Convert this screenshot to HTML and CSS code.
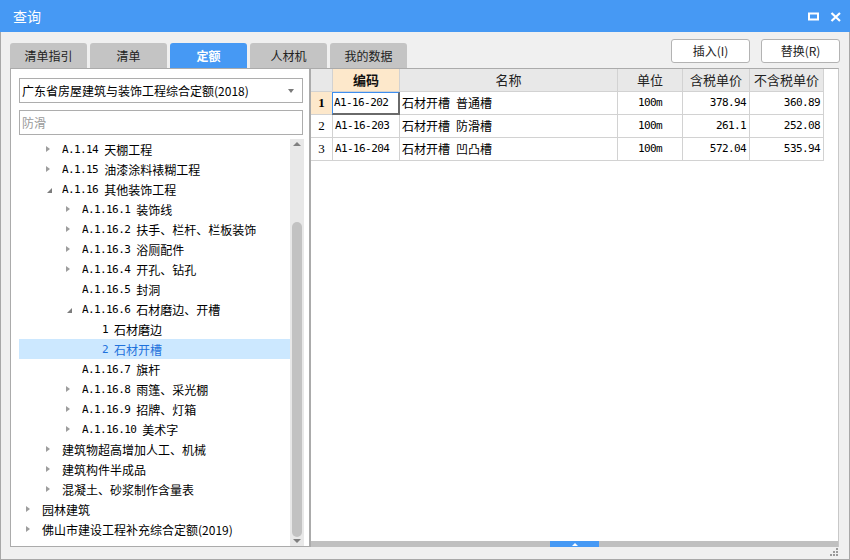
FILE: index.html
```html
<!DOCTYPE html>
<html lang="zh-CN">
<head>
<meta charset="utf-8">
<title>查询</title>
<link rel="stylesheet" href="styles.css">
</head>
<body>
<div class="window">
  <div class="titlebar">
    <span class="title">查询</span>
    <div class="ctrls">
      <svg class="ico" width="12" height="10" viewBox="0 0 12 10"><rect x="1" y="1.5" width="9" height="6" fill="none" stroke="#fff" stroke-width="2"/></svg>
      <svg class="ico" width="12" height="10" viewBox="0 0 12 10"><path d="M1.5 1 L10 9 M10 1 L1.5 9" stroke="#fff" stroke-width="2.2"/></svg>
    </div>
  </div>
  <div class="content">
    <div class="toprow">
      <div class="tabs">
        <div class="tab">清单指引</div>
        <div class="tab">清单</div>
        <div class="tab active">定额</div>
        <div class="tab">人材机</div>
        <div class="tab">我的数据</div>
      </div>
      <div class="buttons">
        <div class="btn">插入(I)</div>
        <div class="btn">替换(R)</div>
      </div>
    </div>
    <div class="panes">
      <div class="left">
        <div class="combo"><span>广东省房屋建筑与装饰工程综合定额(2018)</span><span class="caret"></span></div>
        <div class="search">防滑</div>
        <div class="treewrap">
          <div class="tree">
            <div class="row l2"><i class="ar"></i><span class="m">A.1.14 </span>天棚工程</div>
            <div class="row l2"><i class="ar"></i><span class="m">A.1.15 </span>油漆涂料裱糊工程</div>
            <div class="row l2"><i class="ar open"></i><span class="m">A.1.16 </span>其他装饰工程</div>
            <div class="row l3"><i class="ar"></i><span class="m">A.1.16.1 </span>装饰线</div>
            <div class="row l3"><i class="ar"></i><span class="m">A.1.16.2 </span>扶手、栏杆、栏板装饰</div>
            <div class="row l3"><i class="ar"></i><span class="m">A.1.16.3 </span>浴厕配件</div>
            <div class="row l3"><i class="ar"></i><span class="m">A.1.16.4 </span>开孔、钻孔</div>
            <div class="row l3"><i class="ar none"></i><span class="m">A.1.16.5 </span>封洞</div>
            <div class="row l3"><i class="ar open"></i><span class="m">A.1.16.6 </span>石材磨边、开槽</div>
            <div class="row l4"><i class="ar none"></i><span class="m">1 </span>石材磨边</div>
            <div class="row l4 sel"><i class="ar none"></i><span class="m">2 </span>石材开槽</div>
            <div class="row l3"><i class="ar none"></i><span class="m">A.1.16.7 </span>旗杆</div>
            <div class="row l3"><i class="ar"></i><span class="m">A.1.16.8 </span>雨篷、采光棚</div>
            <div class="row l3"><i class="ar"></i><span class="m">A.1.16.9 </span>招牌、灯箱</div>
            <div class="row l3"><i class="ar"></i><span class="m">A.1.16.10 </span>美术字</div>
            <div class="row l2"><i class="ar"></i>建筑物超高增加人工、机械</div>
            <div class="row l2"><i class="ar"></i>建筑构件半成品</div>
            <div class="row l2"><i class="ar"></i>混凝土、砂浆制作含量表</div>
            <div class="row l1"><i class="ar"></i>园林建筑</div>
            <div class="row l1"><i class="ar"></i>佛山市建设工程补充综合定额(2019)</div>
          </div>
          <div class="vscroll">
            <i class="sa up"></i>
            <div class="thumbarea"><div class="thumb"></div></div>
            <i class="sa down"></i>
          </div>
        </div>
      </div>
      <div class="right">
        <div class="grid">
          <div class="h rn"></div>
          <div class="h code">编码</div>
          <div class="h">名称</div>
          <div class="h">单位</div>
          <div class="h">含税单价</div>
          <div class="h">不含税单价</div>

          <div class="c rn cur">1</div>
          <div class="c m focus">A1-16-202</div>
          <div class="c name">石材开槽&ensp;普通槽</div>
          <div class="c m ctr">100m</div>
          <div class="c m num">378.94</div>
          <div class="c m num">360.89</div>

          <div class="c rn">2</div>
          <div class="c m">A1-16-203</div>
          <div class="c name">石材开槽&ensp;防滑槽</div>
          <div class="c m ctr">100m</div>
          <div class="c m num">261.1</div>
          <div class="c m num">252.08</div>

          <div class="c rn">3</div>
          <div class="c m">A1-16-204</div>
          <div class="c name">石材开槽&ensp;凹凸槽</div>
          <div class="c m ctr">100m</div>
          <div class="c m num">572.04</div>
          <div class="c m num">535.94</div>
        </div>
        <div class="spacer"></div>
        <div class="hbar"><div class="handle"><i class="hup"></i></div></div>
      </div>
    </div>
    <div class="footer">
      <svg width="9" height="9" viewBox="0 0 9 9" fill="#9a9a9a"><rect x="6" y="0" width="2" height="2"/><rect x="3" y="3" width="2" height="2"/><rect x="6" y="3" width="2" height="2"/><rect x="0" y="6" width="2" height="2"/><rect x="3" y="6" width="2" height="2"/><rect x="6" y="6" width="2" height="2"/></svg>
    </div>
  </div>
</div>
</body>
</html>
```

FILE: styles.css
```css
* { box-sizing: border-box; }
html, body { margin: 0; padding: 0; background: #f0f0f0; }
body { font-family: "Noto Sans CJK SC", "Liberation Sans", sans-serif; font-size: 12px; color: #000; }

.window {
  width: 850px; height: 560px;
  border: 1px solid #a8a8a8; border-top: none;
  background: #f0f0f0;
  display: flex; flex-direction: column;
}
.titlebar {
  height: 32px; background: #4699f4; margin: 0 -1px;
  display: flex; align-items: center; justify-content: space-between;
  padding: 0 8px 0 13px;
}
.title { color: #fff; font-size: 14px; line-height: 16px; }
.ctrls { display: flex; gap: 10px; align-items: center; padding-top: 1px; }
.ico { display: block; }

.content { flex: 1; display: flex; flex-direction: column; padding: 0 9px 0 9px; }
.toprow { height: 36px; display: flex; justify-content: space-between; align-items: flex-end; }
.tabs { display: flex; gap: 3px; }
.tab {
  width: 77px; height: 25px; background: #c4c4c4; border-radius: 3px 3px 0 0;
  text-align: center; line-height: 25px; font-size: 12px; color: #222;
}
.tab.active { background: #4699f4; color: #fff; font-weight: bold; }
.buttons { display: flex; gap: 11px; align-self: flex-start; margin-top: 7px; }
.btn {
  width: 79px; height: 24px; background: #fff; border: 1px solid #b3b3b3; border-radius: 3px;
  text-align: center; line-height: 22px; font-size: 12px; color: #222;
}

.panes { height: 479px; display: flex; }
.left {
  width: 300px; background: #fff; border: 1px solid #ababab;
  display: flex; flex-direction: column; padding: 9px 5px 0 8px;
}
.combo {
  height: 25px; width: 284px; border: 1px solid #adadad; display: flex; align-items: center;
  justify-content: space-between; padding: 0 8px 0 2px; font-size: 12px;
}
.caret { width: 0; height: 0; border-left: 3.5px solid transparent; border-right: 3.5px solid transparent; border-top: 4px solid #7a7a7a; }
.search {
  margin-top: 7px; height: 25px; width: 284px; border: 1px solid #adadad;
  padding: 0 2px; line-height: 23px; color: #9a9a9a; font-size: 12px;
}
.treewrap { margin-top: 4px; flex: 1; display: flex; min-height: 0; }
.tree { width: 271px; overflow: hidden; }
.row { height: 20px; display: flex; align-items: center; white-space: pre; font-size: 12px; }
.row.l1 { padding-left: 7px; }
.row.l2 { padding-left: 27px; }
.row.l3 { padding-left: 47px; }
.row.l4 { padding-left: 67px; }
.row.sel { background: #cce8ff; color: #1f72dc; }
.m { font-family: "DejaVu Sans Mono", "Liberation Mono", monospace; font-size: 11px; letter-spacing: -0.6px; }
.ar { width: 16px; height: 20px; flex: none; position: relative; }
.ar::before {
  content: ""; position: absolute; left: 0; top: 6.5px; width: 0; height: 0;
  border-left: 4px solid #9d9d9d; border-top: 3.5px solid transparent; border-bottom: 3.5px solid transparent;
}
.ar.open::before {
  left: 1px; top: 9px; border-top: none; border-left: 5px solid transparent; border-bottom: 5px solid #7d7d7d;
}
.ar.none::before { display: none; }

.vscroll { width: 14px; background: #e8e8e8; display: flex; flex-direction: column; align-items: center; }
.sa { flex: none; width: 0; height: 0; border-left: 4px solid transparent; border-right: 4px solid transparent; }
.sa.up { margin-top: 3px; border-bottom: 4px solid #7f7f7f; }
.sa.down { margin: 2px 0 3px; border-top: 4px solid #7f7f7f; }
.thumbarea { flex: 1; width: 100%; display: flex; flex-direction: column; justify-content: flex-end; padding: 0 2px; }
.thumb { height: 315px; background: #c2c2c2; border-radius: 5px; }

.right {
  width: 529px; background: #fff; border: 1px solid #ababab; border-bottom: none; border-right-color: #c8c8c8;
  display: flex; flex-direction: column;
}
.grid { display: grid; grid-template-columns: 22px 67px 218px 65px 67px 74px; grid-auto-rows: 23px; }
.h, .c { border-right: 1px solid #d2d2d2; border-bottom: 1px solid #d2d2d2; white-space: nowrap; overflow: hidden; }
.h { background: #e8e8e8; text-align: center; line-height: 22px; font-size: 13px; color: #222; }
.h.code { background: #fde8cb; font-weight: bold; color: #111; }
.c { line-height: 22px; padding: 0 2px; }
.c.rn { text-align: center; padding: 0; font-family: "Liberation Serif", serif; font-size: 13px; }
.c.rn.cur { background: #fde8cb; font-weight: bold; }
.c.name { font-size: 12px; }
.c.ctr { text-align: center; }
.c.num { text-align: right; padding-right: 3px; }
.c.m { font-size: 11px; }
.c.focus { border-left: 1px solid #3d8ef0; border-top: 1px solid #3d8ef0; border-right: 2px solid #6a6a6a; border-bottom: 2px solid #6a6a6a; line-height: 20px; padding-left: 1px; margin-left: -1px; }
.spacer { flex: 1; }
.hbar { height: 6px; background: #c0c0c0; display: flex; justify-content: flex-start; padding-left: 239px; }
.handle { width: 49px; height: 6px; background: #4699f4; display: flex; justify-content: center; align-items: center; }
.hup { width: 0; height: 0; border-left: 3px solid transparent; border-right: 3px solid transparent; border-bottom: 3px solid #fff; }

.footer { flex: 1; display: flex; justify-content: flex-end; align-items: flex-end; padding: 0 1px 2px 0; }
.footer svg { display: block; }
```
